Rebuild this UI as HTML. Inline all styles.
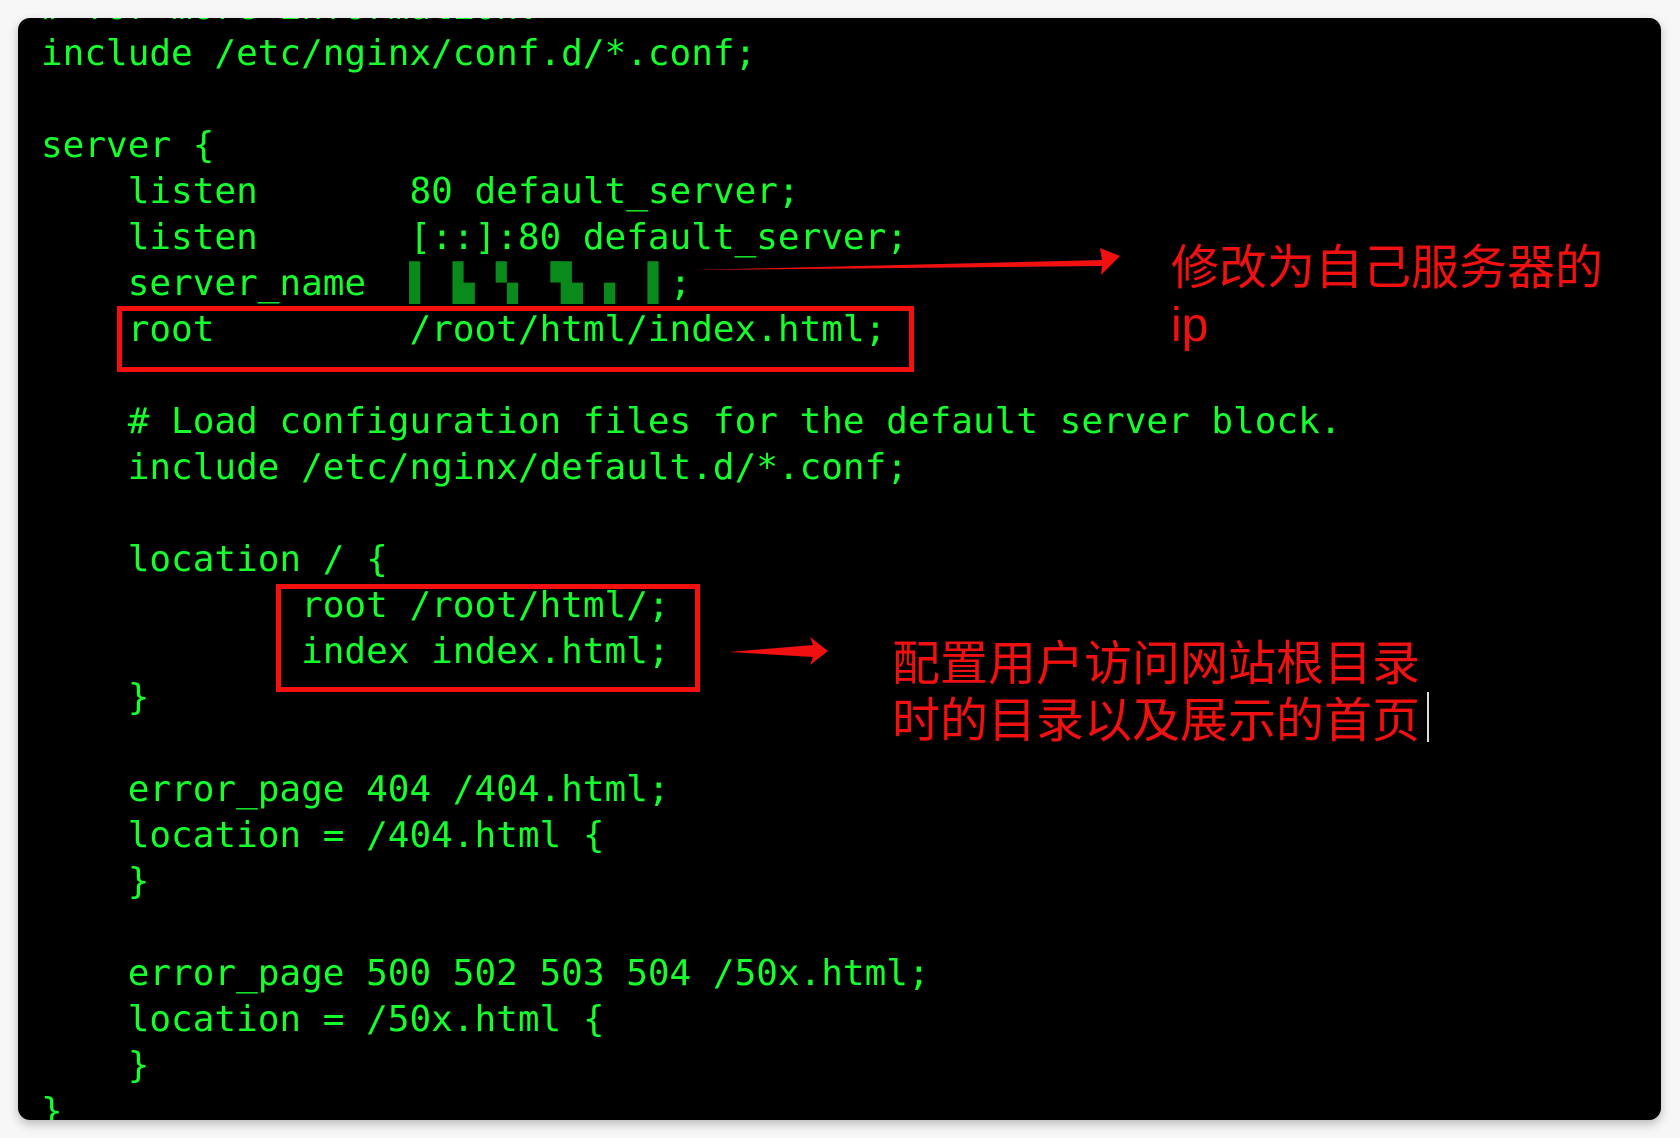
<!DOCTYPE html>
<html><head><meta charset="utf-8"><style>
html,body{margin:0;padding:0;background:#f7f7f7;width:1680px;height:1138px;overflow:hidden}
.term{position:absolute;left:18px;top:18px;width:1643px;height:1102px;background:#000;border-radius:12px;overflow:hidden;box-shadow:0 4px 10px rgba(0,0,0,.25)}
pre{position:absolute;left:23px;top:-33px;margin:0;font-family:"DejaVu Sans Mono","Liberation Mono",monospace;font-size:36px;line-height:46px;color:#14ff2c}
.box{position:absolute;border:5px solid #f51010}
.note{position:absolute;font-family:"Liberation Sans","Noto Sans CJK SC",sans-serif;font-size:48px;line-height:57px;color:#f01010;white-space:nowrap}
</style></head><body>
<div class="term">
<pre># for more information.
include /etc/nginx/conf.d/*.conf;

server {
    listen       80 default_server;
    listen       [::]:80 default_server;
    server_name  <span style="color:#0a8a1a">▌ ▙ ▚ ▝▙ ▖ ▌</span>;
    root         /root/html/index.html;

    # Load configuration files for the default server block.
    include /etc/nginx/default.d/*.conf;

    location / {
            root /root/html/;
            index index.html;
    }

    error_page 404 /404.html;
    location = /404.html {
    }

    error_page 500 502 503 504 /50x.html;
    location = /50x.html {
    }
}</pre>
<div class="box" style="left:99px;top:288px;width:787px;height:56px"></div>
<div class="box" style="left:258px;top:566px;width:414px;height:98px"></div>
<svg width="1643" height="1102" style="position:absolute;left:0;top:0">
<polygon points="676,252 1084,242 1082,230 1102,238 1083,257 1084,248" fill="#f01010"/>
<polygon points="711,634 795,627 792,619 810,633 792,647 795,639" fill="#f01010"/>
</svg>
<div class="note" style="left:1153px;top:222px">修改为自己服务器的<br>ip</div>
<div class="note" style="left:874px;top:618px">配置用户访问网站根目录<br>时的目录以及展示的首页</div>
<div style="position:absolute;left:1409px;top:674px;width:2px;height:50px;background:#ddd"></div>
</div>
</body></html>
